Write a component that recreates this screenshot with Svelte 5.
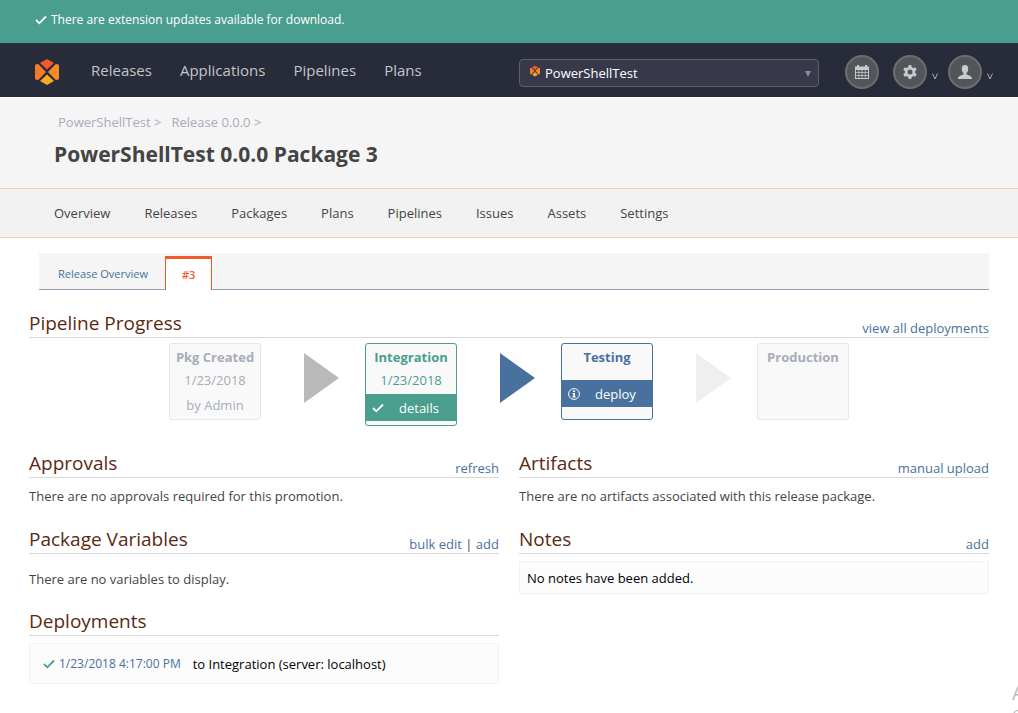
<script>
  const mainNav = ['Releases', 'Applications', 'Pipelines', 'Plans'];
  const subNav = ['Overview', 'Releases', 'Packages', 'Plans', 'Pipelines', 'Issues', 'Assets', 'Settings'];
  const stages = [
    { name: 'Pkg Created', lines: ['1/23/2018', 'by Admin'], tone: 'muted', arrow: 'done' },
    { name: 'Integration', lines: ['1/23/2018'], tone: 'green', action: 'details', arrow: 'next' },
    { name: 'Testing', lines: [], tone: 'blue', action: 'deploy', arrow: 'later' },
    { name: 'Production', lines: [], tone: 'muted' }
  ];
  let application = $state('PowerShellTest');
</script>

{#snippet logo(cls)}
  <svg class={cls} viewBox="0 0 24 26" aria-hidden="true">
    <path d="M12 0 19 4 12 10.500 5 4Z" fill="#f15a29" />
    <path d="M0 7Q0 5 2 5L3.500 5.200 11 13 3.500 20.800 2 21Q0 21 0 19Z" fill="#f47b29" />
    <path d="M24 7Q24 5 22 5L20.500 5.200 13 13 20.500 20.800 22 21Q24 21 24 19Z" fill="#f68b28" />
    <path d="M12 26 19 22 12 15.500 5 22Z" fill="#f9a825" />
  </svg>
{/snippet}

{#snippet check()}
  <svg class="check" viewBox="0 0 12 10" aria-hidden="true">
    <path d="M1 5 4.300 8.300 11 1.500" fill="none" stroke="currentColor" stroke-width="1.800" />
  </svg>
{/snippet}

<div class="page">
  <div class="notice">
    {@render check()}
    <a href="#updates">There are extension updates available for download.</a>
  </div>

  <header class="topbar">
    <a class="home" href="#home" aria-label="Home">{@render logo('logo')}</a>
    <nav class="main-nav" aria-label="Main">
      {#each mainNav as item}<a href="#{item}">{item}</a>{/each}
    </nav>
    <div class="picker">
      {@render logo('mini-logo')}
      <select aria-label="Application" bind:value={application}>
        <option>PowerShellTest</option>
      </select>
      <svg class="caret" viewBox="0 0 6 6" aria-hidden="true"><path d="M0 0H6L3 6Z" fill="#8a8c94" /></svg>
    </div>
    <div class="tools">
      <button class="round" aria-label="Calendar">
        <svg viewBox="0 0 14 14" width="14" height="14" aria-hidden="true">
          <path fill="#c9cacd" fill-rule="evenodd" d="M0 1.500H2V0H4V1.500H10V0H12V1.500H14V14H0ZM1 5V7H3.500V5ZM4.200 5V7H6.600V5ZM7.400 5V7H9.800V5ZM10.500 5V7H13V5ZM1 7.800V10H3.500V7.800ZM4.200 7.800V10H6.600V7.800ZM7.400 7.800V10H9.800V7.800ZM10.500 7.800V10H13V7.800ZM1 10.800V13H3.500V10.800ZM4.200 10.800V13H6.600V10.800ZM7.400 10.800V13H9.800V10.800ZM10.500 10.800V13H13V10.800Z" />
        </svg>
      </button>
      <button class="round gear" aria-label="Administration">
        <svg viewBox="0 0 14 14" width="14" height="14" aria-hidden="true">
          <g fill="#c9cacd">
            {#each [0, 60, 120] as angle}
              <rect x="5.400" y="0" width="3.200" height="14" rx="1" transform="rotate({angle} 7 7)" />
            {/each}
            <circle cx="7" cy="7" r="5.200" />
          </g>
          <circle cx="7" cy="7" r="2.500" fill="#54555a" />
        </svg>
      </button>
      <svg class="vee" viewBox="0 0 6 7" aria-hidden="true"><path d="M.5 .5 3 6 5.500 .5" fill="none" stroke="#a9aab0" /></svg>
      <button class="round user" aria-label="Account">
        <svg viewBox="0 0 14 14" width="14" height="14" aria-hidden="true">
          <path fill="#c9cacd" d="M7 0C9.300 0 10.300 1.500 10.200 4 10.100 6 9.500 7.200 8.500 8V9.600C11 10.500 14 11 14 14H0C0 11 3 10.500 5.500 9.600V8C4.500 7.200 3.900 6 3.800 4 3.700 1.500 4.700 0 7 0Z" />
        </svg>
      </button>
      <svg class="vee" viewBox="0 0 6 7" aria-hidden="true"><path d="M.5 .5 3 6 5.500 .5" fill="none" stroke="#a9aab0" /></svg>
    </div>
  </header>

  <div class="title-area">
    <nav class="crumbs" aria-label="Breadcrumb">
      <a href="#application">PowerShellTest &gt;</a>
      <a href="#release">Release 0.0.0 &gt;</a>
    </nav>
    <h1>PowerShellTest 0.0.0 Package 3</h1>
  </div>

  <nav class="sub-nav" aria-label="Application sections">
    {#each subNav as item}<a href="#app-{item}">{item}</a>{/each}
  </nav>

  <main>
    <nav class="tabs" aria-label="Release packages">
      <a href="#release-overview">Release Overview</a>
      <a class="active" href="#package-3" aria-current="page">#3</a>
    </nav>

    <section>
      <div class="head">
        <h2>Pipeline Progress</h2>
        <a href="#deployments">view all deployments</a>
      </div>
      <div class="pipeline">
        {#each stages as stage}
          <div class="stage {stage.tone}">
            <strong>{stage.name}</strong>
            {#each stage.lines as line}<span>{line}</span>{/each}
            {#if stage.action}
              <a href="#{stage.action}">
                {#if stage.action === 'details'}
                  {@render check()}
                {:else}
                  <svg class="info" viewBox="0 0 12 12" aria-hidden="true">
                    <circle cx="6" cy="6" r="5.400" fill="none" stroke="#fff" />
                    <path d="M5 2.500H7V4H5ZM4.500 5H7V8.500H7.800V9.500H4.300V8.500H5.200V6H4.500Z" fill="#fff" />
                  </svg>
                {/if}
                <span>{stage.action}</span>
              </a>
            {/if}
          </div>
          {#if stage.arrow}
            <svg class="arrow {stage.arrow}" viewBox="0 0 35 50" aria-hidden="true"><path d="M0 0 35 25 0 50Z" /></svg>
          {/if}
        {/each}
      </div>
    </section>

    <div class="columns">
      <div>
        <section>
          <div class="head"><h2>Approvals</h2><a href="#refresh">refresh</a></div>
          <p>There are no approvals required for this promotion.</p>
        </section>
        <section>
          <div class="head">
            <h2>Package Variables</h2>
            <span><a href="#bulk-edit">bulk edit</a> | <a href="#add-variable">add</a></span>
          </div>
          <p class="roomy">There are no variables to display.</p>
        </section>
        <section>
          <div class="head"><h2>Deployments</h2></div>
          <div class="card deployment">
            {@render check()}
            <a href="#deployment">1/23/2018 4:17:00 PM</a>
            <span>to Integration (server: localhost)</span>
          </div>
        </section>
      </div>
      <div>
        <section>
          <div class="head"><h2>Artifacts</h2><a href="#upload">manual upload</a></div>
          <p>There are no artifacts associated with this release package.</p>
        </section>
        <section>
          <div class="head"><h2>Notes</h2><a href="#add-note">add</a></div>
          <div class="card">No notes have been added.</div>
        </section>
      </div>
    </div>
  </main>

  <div class="corner" aria-hidden="true"><span class="big">A</span><span>G</span></div>
</div>

<style>
  :global(body) {
    margin: 0;
    background: #fff;
    overflow: hidden;
  }
  .page {
    position: relative;
    min-height: 100vh;
    overflow: hidden;
    font: 13px/20px 'Open Sans', 'Noto Sans', sans-serif;
    color: #444;
  }
  a {
    color: #48719e;
    text-decoration: none;
  }
  h1, h2, p {
    margin: 0;
  }
  .check {
    width: 12px;
    height: 10px;
    flex: none;
  }
  .notice {
    display: flex;
    align-items: center;
    gap: 4px;
    padding: 10px 35px 13px;
    background: #4a9e8e;
    color: #fff;
    font-size: 12px;
  }
  .notice a {
    color: #fff;
  }

  .topbar {
    display: flex;
    align-items: center;
    height: 54px;
    padding: 0 25px 0 35px;
    background: #282b39;
  }
  .home {
    display: flex;
    margin: 4px 32px 0 0;
  }
  .logo {
    width: 24px;
    height: 26px;
  }
  .main-nav {
    display: flex;
    flex: 1;
    gap: 28px;
    font-size: 15px;
  }
  .main-nav a {
    color: #c3c5ca;
  }
  .picker {
    position: relative;
    width: 300px;
    margin-top: 6px;
  }
  .picker select {
    display: block;
    width: 100%;
    height: 28px;
    box-sizing: border-box;
    padding: 0 24px 0 25px;
    appearance: none;
    border: 1px solid #5d5f69;
    border-radius: 4px;
    background: #37394b;
    color: #fff;
    font: inherit;
  }
  .mini-logo {
    position: absolute;
    left: 11px;
    top: 6px;
    width: 10px;
    height: 12px;
  }
  .caret {
    position: absolute;
    right: 8px;
    top: 12px;
    width: 6px;
    height: 6px;
  }
  .tools {
    display: flex;
    align-items: center;
    margin: 4px 0 0 26px;
  }
  .round {
    display: grid;
    place-items: center;
    width: 34px;
    height: 34px;
    padding: 0;
    border: 2px solid #6c6d71;
    border-radius: 50%;
    background: #54555a;
  }
  .gear {
    margin-left: 14px;
  }
  .user {
    margin-left: 10px;
  }
  .vee {
    width: 6px;
    height: 7px;
    margin: 8px 0 0 5px;
  }

  .title-area {
    padding: 15px 54px 18px;
    background: #f5f5f5;
    border-bottom: 1px solid #f9c7b6;
  }
  .crumbs {
    display: flex;
    gap: 10px;
    padding-left: 4px;
  }
  .crumbs a {
    color: #a7adba;
  }
  h1 {
    padding-top: 6px;
    font-size: 21px;
    line-height: 32px;
  }
  .sub-nav {
    display: flex;
    gap: 34px;
    padding: 14px 54px;
    background: #f2f2f2;
    border-bottom: 1px solid #f9c7b6;
  }
  .sub-nav a {
    color: #444;
  }

  main {
    padding: 15px 29px 20px;
  }
  .tabs {
    display: flex;
    align-items: flex-end;
    height: 37px;
    box-sizing: border-box;
    margin: 0 0 18px 10px;
    padding-left: 19px;
    background: #f5f5f5;
    border-bottom: 1px solid #8fa0b3;
    font-size: 11px;
  }
  .tabs a {
    padding-bottom: 5px;
  }
  .tabs .active {
    margin: 0 0 -1px 17px;
    padding: 6px 16px 5px;
    border: 1px solid #f15a29;
    border-top-width: 3px;
    border-bottom: 0;
    background: #fff;
    color: #f15a29;
    font-weight: 600;
  }
  .head {
    display: flex;
    align-items: flex-end;
    justify-content: space-between;
    height: 29px;
    border-bottom: 1px solid #d9d9d9;
    line-height: 18px;
  }
  h2 {
    font-size: 19px;
    line-height: 27px;
    font-weight: 400;
    color: #5a2a12;
  }
  .pipeline {
    display: flex;
    justify-content: center;
    align-items: flex-start;
    padding-top: 5px;
    height: 83px;
  }
  .stage {
    display: flex;
    flex-direction: column;
    width: 92px;
    min-height: 77px;
    box-sizing: border-box;
    border: 1px solid;
    border-radius: 3px;
    background: #f9f9f9;
    text-align: center;
    white-space: nowrap;
  }
  .stage strong {
    line-height: 26px;
  }
  .stage > span {
    line-height: 20px;
  }
  .stage > span + span {
    margin-top: 5px;
  }
  .stage a {
    display: flex;
    align-items: center;
    gap: 15px;
    padding: 4px 7px 3px 6px;
    color: #fff;
  }
  .muted {
    color: #a7adba;
    border-color: #e6e6e6;
  }
  .green {
    min-height: 83px;
    color: #4a9e8e;
  }
  .green a {
    margin-top: 4px;
    background: #4a9e8e;
  }
  .blue {
    color: #48719e;
  }
  .blue a {
    margin-top: 10px;
    background: #48719e;
  }
  .info {
    width: 12px;
    height: 12px;
  }
  .arrow {
    flex: none;
    width: 35px;
    height: 50px;
    margin: 10px 26px 0 43px;
  }
  .done { fill: #b9b9b9; }
  .next { fill: #48719e; }
  .later { fill: #efefef; }

  .columns {
    display: grid;
    grid-template-columns: 1fr 1fr;
    gap: 20px;
    margin-top: 22px;
  }
  .columns section + section {
    margin-top: 18px;
  }
  p {
    padding-top: 8px;
  }
  .roomy {
    padding: 15px 0 0;
    margin-bottom: -1px;
  }
  .card {
    margin-top: 7px;
    padding: 6px 7px 5px;
    border: 1px solid #f3f3f3;
    background: #fcfcfc;
    color: #000;
  }
  .deployment {
    display: flex;
    align-items: center;
    gap: 4px;
    padding: 10px 13px 9px;
    color: #4a9e8e;
  }
  .deployment a {
    font-size: 12px;
  }
  .deployment span {
    margin-left: 8px;
    color: #000;
  }
  .corner {
    position: absolute;
    left: 1012px;
    bottom: -10px;
    display: flex;
    flex-direction: column;
    color: #bbb;
    font-size: 15px;
    line-height: 18px;
  }
  .big {
    font-size: 20px;
    line-height: 24px;
  }
</style>
